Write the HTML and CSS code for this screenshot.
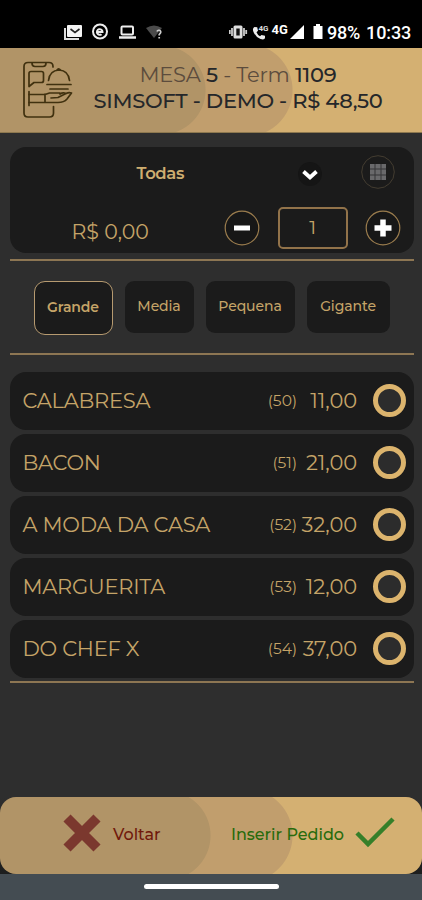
FILE: index.html
```html
<!DOCTYPE html>
<html lang="pt-BR">
<head>
<meta charset="utf-8">
<meta name="viewport" content="width=device-width, initial-scale=1">
<title>Mesa 5</title>
<link rel="stylesheet" href="styles.css">
</head>
<body>
<div class="status">
  <svg class="status-left" width="110" height="22" viewBox="60 20 110 22">
    <path d="M65 28v11h14" fill="none" stroke="#ddd" stroke-width="2"/>
    <rect x="67" y="25" width="15" height="12" rx="1" fill="#f4f4f4"/>
    <path d="M70.500 29l4.500 3.500 4.500-3.500" fill="none" stroke="#222" stroke-width="1.600"/>
    <circle cx="100" cy="31.500" r="7" fill="none" stroke="#eee" stroke-width="2"/>
    <path d="M97.500 32h5a2.800 2.800 0 1 0-1 2.200" fill="none" stroke="#eee" stroke-width="2"/>
    <rect x="121.500" y="26.500" width="11.500" height="8" rx="1" fill="none" stroke="#eee" stroke-width="2"/>
    <path d="M119 37.500h17" stroke="#eee" stroke-width="2.500"/>
    <path d="M146 28q8-5 16 0l-8 10z" fill="#4b4b4b"/>
    <path d="M157 31.500q.5-1.500 2.200-1.200 2.300.6 1.200 2.700l-1.200 1.500v1M159.200 37v1.500" fill="none" stroke="#ccc" stroke-width="1.700"/>
  </svg>
  <div class="status-right">
    <svg width="94" height="22" viewBox="229 20 94 22">
      <rect x="233.500" y="25.500" width="9" height="13" rx="1.500" fill="#ddd"/>
      <rect x="236.300" y="28.500" width="3.400" height="7" fill="#111"/>
      <path d="M232 28v8M244 28v8M229.800 30v4M246.200 30v4" stroke="#ccc" stroke-width="1.800"/>
      <path d="M254.500 27q-2.500 1-1 5 2 5 7 7 4 1.200 4.500-1v-2.200l-3.500-.8-1.500 1.300q-2.500-1.300-3.500-4l1.500-1.500-.8-3.500z" fill="#eee"/>
      <text class="net-small" x="258.500" y="31">4G</text>
      <text class="net" x="271.500" y="34">4G</text>
      <path d="M304 25v14h-14z" fill="#fff"/>
      <path d="M313.500 26h2.500v-2h4v2h2.500v13h-9z" fill="#fff"/>
    </svg>
    <span class="battery">98%</span><span class="clock">10:33</span>
  </div>
</div>

<header class="header banner">
  <svg class="logo" width="52" height="60" viewBox="22 60 52 60" fill="none" stroke="#40310f" stroke-width="1.700" stroke-linecap="round" stroke-linejoin="round">
    <path d="M53 67v-.5q0-4-4-4H28q-4 0-4 4V113q0 4 4 4h21.500q4 0 4-4v-6.500"/>
    <path d="M32 63q0 3.500 3 3.500h8q3 0 3-3.500"/>
    <path d="M29 86.500v-13q0-2 2-2h10.500q2 0 2 2v7q0 2-2 2H34zM29 91.500v14"/>
    <path d="M29 94.500h15.500M45 94v8.500M29 102.500h29q6 0 9-3.500l4.500-6q-2.500-1-5 .3L58 97.500l-7 .5M45 94.500l4.500-1.500H60M66 93.500q-3-1.500-6 .5"/>
    <path d="M48.500 80.500q1-10 10.500-10.500 9.500.5 10.500 10.500M47 84.500h24M50 89h18M57 70q1.500-2.500 3.500 0"/>
  </svg>
  <div class="heading">
    <div class="mesa">MESA <b>5</b> - Term <b>1109</b></div>
    <div class="place">SIMSOFT - DEMO - R$ 48,50</div>
  </div>
</header>

<main class="content">
  <section class="card order">
    <div class="filter">
      <span class="category">Todas</span>
      <svg class="chevron" width="26" height="26" viewBox="0 0 26 26"><circle cx="13" cy="13" r="12" fill="#151515"/><path d="M6.500 10.500l6.500 6 6.500-6" fill="none" stroke="#fff" stroke-width="3.800"/></svg>
      <svg class="grid-btn" width="34" height="34" viewBox="0 0 34 34"><circle cx="17" cy="17" r="16.300" fill="none" stroke="#443d31"/><path d="M9 9h16v16H9z" fill="#69696b"/><path d="M14 9v16M20 9v16M9 14h16M9 20h16" stroke="#343437" stroke-width="1"/></svg>
    </div>
    <div class="quantity">
      <span class="total">R$ 0,00</span>
      <svg class="step" width="36" height="36" viewBox="0 0 36 36"><circle cx="18" cy="18" r="16.800" fill="#171717" stroke="#9b7d4e" stroke-width="1.200"/><path d="M10 18h16" stroke="#fff" stroke-width="5"/></svg>
      <span class="count">1</span>
      <svg class="step" width="36" height="36" viewBox="0 0 36 36"><circle cx="18" cy="18" r="16.800" fill="#171717" stroke="#9b7d4e" stroke-width="1.200"/><path d="M9.500 18h17M18 9.500v17" stroke="#fff" stroke-width="5.500"/></svg>
    </div>
  </section>

  <nav class="sizes">
    <span class="size selected">Grande</span>
    <span class="size">Media</span>
    <span class="size pequena">Pequena</span>
    <span class="size gigante">Gigante</span>
  </nav>

  <section class="items">
    <div class="card item"><span class="name">CALABRESA</span><span class="code">(50)</span><span class="price">11,00</span><i class="ring"></i></div>
    <div class="card item"><span class="name">BACON</span><span class="code">(51)</span><span class="price">21,00</span><i class="ring"></i></div>
    <div class="card item"><span class="name">A MODA DA CASA</span><span class="code">(52)</span><span class="price">32,00</span><i class="ring"></i></div>
    <div class="card item"><span class="name">MARGUERITA</span><span class="code">(53)</span><span class="price">12,00</span><i class="ring"></i></div>
    <div class="card item"><span class="name">DO CHEF X</span><span class="code">(54)</span><span class="price">37,00</span><i class="ring"></i></div>
  </section>
</main>

<div class="footer-wrap">
  <footer class="footer banner">
    <svg class="cross" width="38" height="38" viewBox="0 0 38 38"><path d="M4 4l30 30M34 4L4 34" stroke="#7b382e" stroke-width="10"/></svg>
    <span class="back">Voltar</span>
    <span class="insert">Inserir Pedido</span>
    <svg class="check" width="40" height="31" viewBox="0 0 40 31"><path d="M2 16l11 11L38 2" fill="none" stroke="#367f29" stroke-width="4.500"/></svg>
  </footer>
</div>
<div class="system-nav"><i class="handle"></i></div>
</body>
</html>
```
FILE: styles.css
```css
* { box-sizing: border-box; }
body {
  margin: 0;
  height: 900px;
  display: flex;
  flex-direction: column;
  overflow: hidden;
  background: #2e2e2e;
  color: #c5a468;
  font-family: Montserrat, Inter, sans-serif;
}
svg { display: block; flex: none; }
span { white-space: nowrap; }
.status {
  height: 48px;
  flex: none;
  display: flex;
  justify-content: space-between;
  padding: 20px 11px 0 60px;
  background: #000;
  color: #fff;
  font: 500 18px/25px Roboto, sans-serif;
}
.status-right { display: flex; }
.battery { margin-left: 4px; width: 39px; letter-spacing: -.2px; }
.clock { width: 45px; letter-spacing: -.1px; }
.net { font: 700 13px Roboto, sans-serif; fill: #fff; }
.net-small { font: 700 8px Roboto, sans-serif; fill: #ddd; }
.banner {
  --left: 161px;
  background:
    radial-gradient(circle 45px at var(--left) 50%, #b19467 98%, transparent 100%),
    linear-gradient(#b19467, #b19467) 0 0 / var(--left) 100% no-repeat,
    radial-gradient(circle 47px at 246px 50%, #c19e6d 98%, transparent 100%),
    linear-gradient(#c19e6d, #c19e6d) 0 0 / 246px 100% no-repeat,
    #d4b072;
}
.header {
  height: 85px;
  flex: none;
  display: flex;
  border-bottom: 1px solid #8d784f;
  padding: 12px 0 0 22px;
}
.heading {
  width: 290px;
  margin: 2px 0 0 19px;
  text-align: center;
  color: #25272a;
  white-space: nowrap;
  line-height: 26px;
  font-size: 21px;
}
.mesa { color: #5c4c3d; letter-spacing: -.2px; }
.mesa b { font-weight: 500; color: #25272a; }
.place { font-weight: 500; letter-spacing: -.3px; }
.content { flex: 1; padding: 14px 8px 0 9.500px; }
.card { background: #1b1b1b; border-radius: 16px; }
.order { height: 106px; padding: 8px 13px 0 18px; }
.filter { display: flex; height: 36px; align-items: center; }
.category { margin-left: 109px; width: 160px; font-size: 16.500px; font-weight: 600; letter-spacing: -.4px; color: #cfae70; }
.chevron { margin-top: 2px; }
.grid-btn { margin: -2px 0 0 38px; }
.quantity { display: flex; height: 42px; margin-top: 15px; align-items: center; padding-top: 2px; }
.total { margin: 6px 0 0 44px; width: 153px; font-size: 20.500px; }
.count {
  margin: 0 17.500px 0 18px;
  width: 70px;
  height: 42px;
  border: 2px solid #92734a;
  border-radius: 5px;
  text-align: center;
  font-size: 19px;
  line-height: 37px;
}
.sizes {
  height: 96px;
  margin-top: 6px;
  border-top: 2px solid #8d7653;
  border-bottom: 2px solid #8d7653;
  display: flex;
  gap: 12px;
  padding: 20px 0 0 24px;
}
.size {
  width: 69px;
  height: 52px;
  background: #1b1b1b;
  border-radius: 9px;
  text-align: center;
  font-size: 14px;
  letter-spacing: -.1px;
  line-height: 51px;
  font-weight: 500;
}
.selected { width: 79px; height: 54px; border: 1px solid #b69a70; border-radius: 11px; font-weight: 600; }
.pequena { width: 89px; }
.gigante { width: 83px; }
.items { margin-top: 17px; border-bottom: 2px solid #8d7653; display: grid; gap: 4px; padding-bottom: 3px; }
.item { height: 58px; padding: 0 8px 2px 13px; display: flex; align-items: center; }
.name { flex: 1; font-size: 21px; letter-spacing: -.25px; }
.code { font-size: 15.500px; width: 36px; text-align: right; }
.price { width: 60px; text-align: right; font-size: 21px; letter-spacing: -.1px; }
.ring { width: 33px; height: 33px; margin-left: 16px; border: 5px solid #dcb46d; border-radius: 50%; background: #2c2c2c; }
.footer-wrap { flex: none; background: linear-gradient(#2e2e2e, #1d1e1e); }
.footer {
  --left: 166px;
  height: 77px;
  border-radius: 16px;
  display: flex;
  align-items: center;
  padding: 0 27px 0 63px;
  font-size: 16px;
  font-weight: 500;
}
.cross { margin-top: -6px; }
.back { margin: -3px 0 0 12px; color: #70190b; }
.insert { margin: -3px 0 0 auto; color: #286b0c; }
.check { margin: -6px 0 0 11px; }
.system-nav { height: 26px; flex: none; background: #444c52; display: flex; justify-content: center; padding-top: 10px; }
.handle { width: 135px; height: 5px; border-radius: 3px; background: #fff; }
```
